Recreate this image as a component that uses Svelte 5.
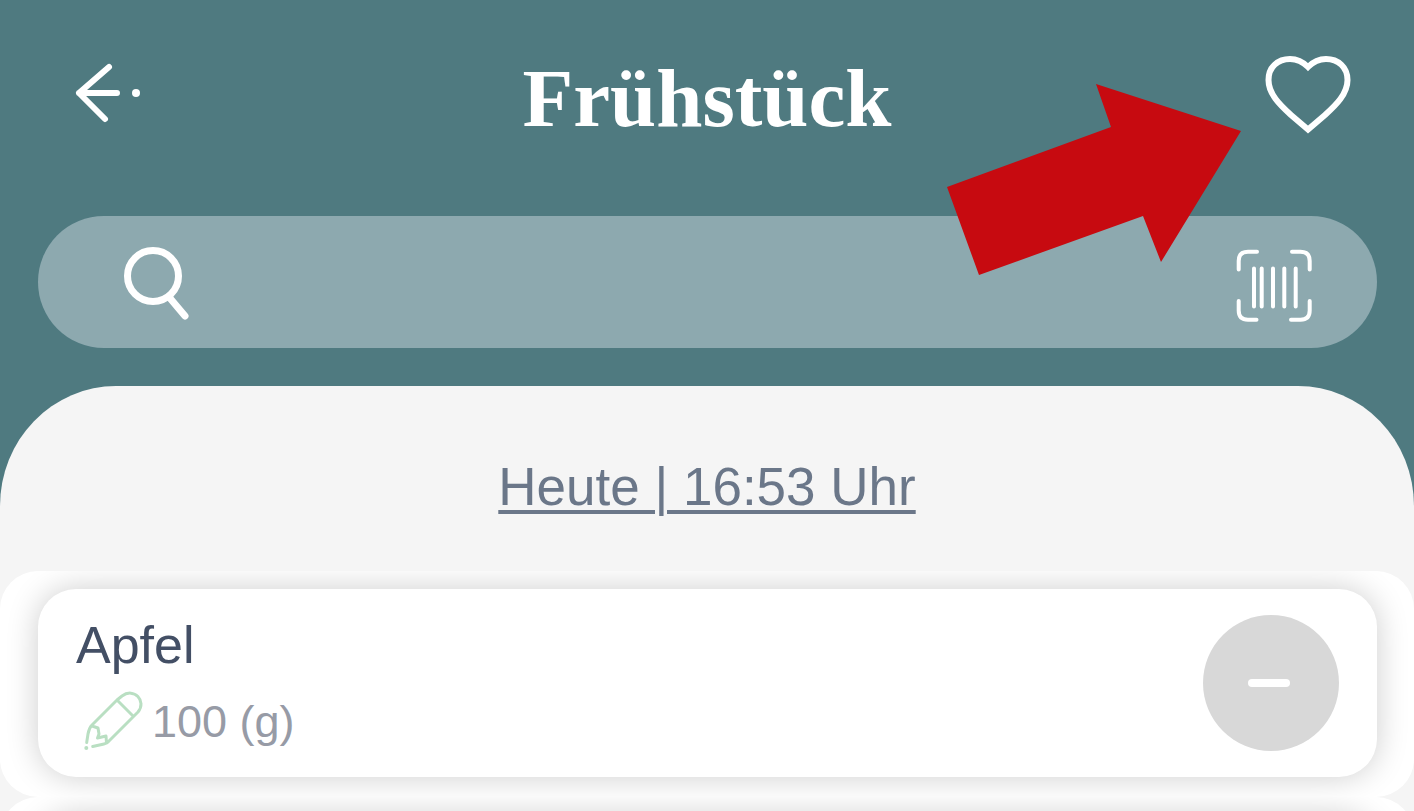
<script>
  let title = "Frühstück";
  let time = "Heute | 16:53 Uhr";
  let search = "";

  let items = [
    { id: 1, name: "Apfel", amount: "100 (g)" },
    { id: 2, name: "", amount: "" },
  ];

  function remove(item) {
    items = items.filter((i) => i.id !== item.id);
  }
</script>

<main>
  <header>
    <div class="bar">
      <button class="icon" aria-label="Zurück">
        <svg width="96" height="96" viewBox="0 0 96 96">
          <path d="M51 17L21 43L47 69M21 43H59" stroke-width="6" />
          <circle class="dot" cx="78" cy="43" r="4" />
        </svg>
      </button>
      <h1>{title}</h1>
      <button class="icon" aria-label="Favorit">
        <svg width="96" height="96" viewBox="0 0 96 96">
          <path class="heart" d="M48 79.500L31 65C20 55 8.500 44 8.500 30C8.500 17 18 9 30 9C37 9 43 12 48 17C53 12 59 9 66 9C78 9 87.500 17 87.500 30C87.500 44 76 55 65 65Z" stroke-width="6" />
        </svg>
      </button>
    </div>

    <label class="search">
      <svg width="80" height="80" viewBox="0 0 80 80">
        <circle cx="35" cy="34" r="25.5" stroke-width="7" />
        <path d="M51 55L67 74" stroke-width="7" />
      </svg>
      <input type="text" aria-label="Suche" bind:value={search} />
      <button class="icon" aria-label="Barcode scannen">
        <svg width="80" height="80" viewBox="0 0 80 80">
          <path d="M4.7 27.500V19Q4.700 9.700 14 9.700H23M58 9.700H66.500Q75.700 9.700 75.700 19V27.500M75.700 59V68.500Q75.700 77.700 66.500 77.700H57M22.500 77.700H14Q4.700 77.700 4.700 68.500V59" stroke-width="4" />
          <path d="M20 26.500V64.500M27.700 26.500V64.500M39 26.500V64.500M50.300 26.500V64.500M61.700 26.500V64.500" stroke-width="4" />
        </svg>
      </button>
    </label>

    <!-- hint pointing at the favourite button -->
    <svg class="pointer" width="294" height="192" viewBox="0 0 294 192" aria-hidden="true">
      <polygon points="0,103 164,43 149,0 294,47 214,178 196,132 32,191" />
    </svg>
  </header>

  <section class="sheet">
    <a class="time" href="#time">{time}</a>

    <ul>
      {#each items as item (item.id)}
        <li>
          <div class="card">
            {#if item.name}
              <div class="info">
                <h2>{item.name}</h2>
                <div class="amount">
                  <svg width="64" height="62" viewBox="0 3 64 62">
                    <path d="M4.700 54.500L6 46Q7 40 10 37L35 12L40 8C52 -1 65 13 56 24L27 53Q25 55.500 22 56L10.700 58.500M35 12L51 28M10 38L16 40L17 46L15.500 50L24 48L24.500 55" stroke-width="3" />
                    <circle class="dot" cx="4.3" cy="60" r="2" />
                  </svg>
                  <span>{item.amount}</span>
                </div>
              </div>
              <button class="minus" aria-label="Entfernen" on:click={() => remove(item)}>
                <svg width="136" height="136" viewBox="0 0 136 136">
                  <path d="M49 68H83" stroke-width="8" />
                </svg>
              </button>
            {/if}
          </div>
        </li>
      {/each}
    </ul>
  </section>
</main>

<style>
  :global(body) {
    margin: 0;
    background: #4f7a80;
  }

  main {
    height: 100vh;
    overflow: hidden;
    font-family: "Liberation Sans", Arial, sans-serif;
  }

  svg {
    display: block;
    flex: none;
    fill: none;
    stroke: white;
    stroke-linecap: round;
    stroke-linejoin: round;
  }

  .dot {
    fill: white;
    stroke: none;
  }

  .heart {
    stroke-linejoin: miter;
  }

  button {
    padding: 0;
    border: none;
    background: none;
    cursor: pointer;
  }

  header {
    position: relative;
    padding: 50px 37px 38px 38px;
  }

  .bar {
    display: flex;
    justify-content: space-between;
    align-items: center;
    padding: 0 21px 0 20px;
    margin-bottom: 70px;
  }

  h1 {
    margin: 0;
    color: white;
    font-family: "Liberation Serif", "Times New Roman", serif;
    font-size: 83px;
    font-weight: bold;
    line-height: 96px;
  }

  .search {
    display: flex;
    align-items: center;
    height: 132px;
    padding: 0 63px 0 80px;
    box-sizing: border-box;
    border-radius: 66px;
    background: #8da9af;
  }

  .search input {
    flex: 1;
    min-width: 0;
    height: 80px;
    padding: 0 24px;
    border: none;
    outline: none;
    background: none;
    color: white;
    font-family: inherit;
    font-size: 45px;
  }

  .pointer {
    position: absolute;
    top: 84px;
    right: 173px;
    pointer-events: none;
  }

  .pointer polygon {
    fill: #c70a10;
    stroke: none;
  }

  .sheet {
    display: flex;
    flex-direction: column;
    align-items: center;
    min-height: 100vh;
    padding-top: 71px;
    border-radius: 116px 116px 0 0 / 120px 120px 0 0;
    background: #f5f5f5;
  }

  .time {
    margin-bottom: 54px;
    color: #6b7789;
    font-size: 53px;
    line-height: 60px;
    text-decoration: underline;
    text-decoration-thickness: 4px;
    text-underline-offset: 5px;
  }

  ul {
    width: 100%;
    margin: 0;
    padding: 0;
    list-style: none;
  }

  li {
    padding: 18px 37px 20px 38px;
    border-radius: 38px;
    background: white;
    overflow: hidden;
  }

  .card {
    display: flex;
    justify-content: space-between;
    align-items: flex-start;
    min-height: 188px;
    padding: 26px 38px 24px;
    box-sizing: border-box;
    border-radius: 38px;
    background: white;
    box-shadow: 0 0 32px rgba(0, 0, 0, 0.2);
  }

  h2 {
    margin: 0 0 16px;
    color: #434f65;
    font-size: 52px;
    font-weight: normal;
    line-height: 60px;
  }

  .amount {
    display: flex;
    align-items: center;
    gap: 6px;
    padding-left: 6px;
    color: #979ba6;
    font-size: 45px;
    line-height: 62px;
  }

  .amount svg {
    stroke: #b9dfc2;
  }

  .amount .dot {
    fill: #b9dfc2;
  }

  .minus {
    border-radius: 50%;
    background: #d8d8d8;
  }
</style>
